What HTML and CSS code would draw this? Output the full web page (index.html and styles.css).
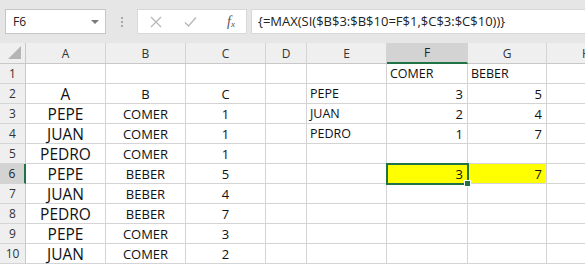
FILE: index.html
```html
<!DOCTYPE html>
<html>
<head>
<meta charset="utf-8">
<link rel="stylesheet" href="styles.css">
</head>
<body>
<div class="app">
  <div class="fbar">
    <div class="namebox"><span>F6</span><span class="dd"></span></div>
    <div class="sep"><i></i><i></i><i></i></div>
    <div class="btns">
      <svg class="ic" width="12" height="12" viewBox="0 0 12 12"><path d="M1 1L11 11M11 1L1 11" stroke="#b8b8b8" stroke-width="1.3" fill="none"/></svg>
      <svg class="ic ck" width="13" height="12" viewBox="0 0 13 12"><path d="M1 6.5L4.5 10L12 1.5" stroke="#b8b8b8" stroke-width="1.4" fill="none"/></svg>
      <span class="fx">f<sub>x</sub></span>
    </div>
    <div class="formula">{=MAX(SI($B$3:$B$10=F$1,$C$3:$C$10))}</div>
  </div>
  <div class="sheet">
    <div class="hd corner"><span class="tri"></span></div>
    <div class="hd">A</div><div class="hd">B</div><div class="hd">C</div><div class="hd">D</div><div class="hd">E</div><div class="hd sel">F</div><div class="hd">G</div><div class="hd">H</div>

    <div class="rh">1</div><div class="c"></div><div class="c"></div><div class="c"></div><div class="c"></div><div class="c"></div><div class="c l">COMER</div><div class="c l">BEBER</div><div class="c"></div>
    <div class="rh">2</div><div class="c a">A</div><div class="c b">B</div><div class="c n">C</div><div class="c"></div><div class="c l">PEPE</div><div class="c r">3</div><div class="c r">5</div><div class="c"></div>
    <div class="rh">3</div><div class="c a">PEPE</div><div class="c b">COMER</div><div class="c n">1</div><div class="c"></div><div class="c l">JUAN</div><div class="c r">2</div><div class="c r">4</div><div class="c"></div>
    <div class="rh">4</div><div class="c a">JUAN</div><div class="c b">COMER</div><div class="c n">1</div><div class="c"></div><div class="c l">PEDRO</div><div class="c r">1</div><div class="c r">7</div><div class="c"></div>
    <div class="rh">5</div><div class="c a">PEDRO</div><div class="c b">COMER</div><div class="c n">1</div><div class="c"></div><div class="c"></div><div class="c"></div><div class="c"></div><div class="c"></div>
    <div class="rh sel">6</div><div class="c a">PEPE</div><div class="c b">BEBER</div><div class="c n">5</div><div class="c"></div><div class="c"></div><div class="c r y active">3</div><div class="c r y">7</div><div class="c"></div>
    <div class="rh">7</div><div class="c a">JUAN</div><div class="c b">BEBER</div><div class="c n">4</div><div class="c"></div><div class="c"></div><div class="c"></div><div class="c"></div><div class="c"></div>
    <div class="rh">8</div><div class="c a">PEDRO</div><div class="c b">BEBER</div><div class="c n">7</div><div class="c"></div><div class="c"></div><div class="c"></div><div class="c"></div><div class="c"></div>
    <div class="rh">9</div><div class="c a">PEPE</div><div class="c b">COMER</div><div class="c n">3</div><div class="c"></div><div class="c"></div><div class="c"></div><div class="c"></div><div class="c"></div>
    <div class="rh">10</div><div class="c a">JUAN</div><div class="c b">COMER</div><div class="c n">2</div><div class="c"></div><div class="c"></div><div class="c"></div><div class="c"></div><div class="c"></div>
  </div>
</div>
</body>
</html>
```

FILE: styles.css
```css
html, body { margin: 0; padding: 0; }
body { width: 585px; height: 266px; overflow: hidden; background: #fff; font-family: "Open Sans", "Liberation Sans", sans-serif; color: #222; }
.app { width: 585px; height: 266px; overflow: hidden; }
.fbar { height: 43px; background: #e6e6e6; display: flex; align-items: flex-start; padding-top: 9px; box-sizing: border-box; }
.namebox { margin-left: 5px; width: 101px; height: 25px; box-sizing: border-box; background: #fff; border: 1px solid #c6c6c6; display: flex; align-items: center; justify-content: space-between; padding: 0 6px 0 7px; font-size: 12px; color: #222; }
.dd { width: 0; height: 0; border-left: 4px solid transparent; border-right: 4px solid transparent; border-top: 4px solid #7a7a7a; }
.sep { width: 31px; height: 25px; display: flex; flex-direction: column; align-items: center; justify-content: center; gap: 2px; }
.sep i { width: 2px; height: 2px; background: #a8a8a8; display: block; }
.btns { width: 110px; height: 25px; box-sizing: border-box; background: #fff; border: 1px solid #d8d8d8; display: flex; align-items: center; padding-left: 12px; }
.ic { display: block; }
.ck { margin-left: 22px; }
.fx { margin-left: 30px; font-family: "Liberation Serif", serif; font-style: italic; font-size: 14px; color: #555; }
.fx sub { font-size: 9px; vertical-align: -1px; }
.formula { margin-left: 4px; flex: 1; height: 25px; box-sizing: border-box; background: #fff; border: 1px solid #d8d8d8; border-right: none; padding-left: 6px; font-size: 13px; line-height: 23px; color: #222; white-space: nowrap; overflow: hidden; }
.sheet { display: grid; grid-template-columns: 26px 80px 80px 80px 41px 80px 81px 79px 80px; grid-template-rows: 21px repeat(11, 20px); }
.hd { background: #efefef; border-right: 1px solid #d4d4d4; border-bottom: 1px solid #c8c8c8; box-sizing: border-box; font-size: 12px; color: #333; display: flex; align-items: center; justify-content: center; }
.hd.sel { background: #d3d3d3; border-bottom: 2px solid #217346; color: #222; }
.corner { position: relative; border-right: 1px solid #c8c8c8; }
.tri { position: absolute; right: 4px; bottom: 4px; width: 0; height: 0; border-left: 13px solid transparent; border-bottom: 13px solid #b5b5b5; }
.rh { background: #efefef; border-right: 1px solid #c8c8c8; border-bottom: 1px solid #d4d4d4; box-sizing: border-box; font-size: 12px; color: #333; display: flex; align-items: center; justify-content: center; }
.rh.sel { background: #d3d3d3; border-right: 2px solid #217346; color: #222; }
.c { border-right: 1px solid #d4d4d4; border-bottom: 1px solid #d4d4d4; box-sizing: border-box; display: flex; align-items: center; white-space: nowrap; font-size: 12px; color: #111; }
.c.a { justify-content: center; font-size: 15.5px; }
.c.b { justify-content: center; font-size: 13px; }
.c.n { justify-content: center; font-size: 13px; }
.c.l { padding-left: 3px; font-size: 12.5px; }
.c.r { justify-content: flex-end; padding-right: 4px; font-size: 13px; }
.c.y { background: #ffff00; }
.c.active { position: relative; outline: 2px solid #217346; outline-offset: -1px; }
.c.active::after { content: ""; position: absolute; right: -4px; bottom: -4px; width: 5px; height: 5px; background: #217346; border: 1px solid #fff; }
```
